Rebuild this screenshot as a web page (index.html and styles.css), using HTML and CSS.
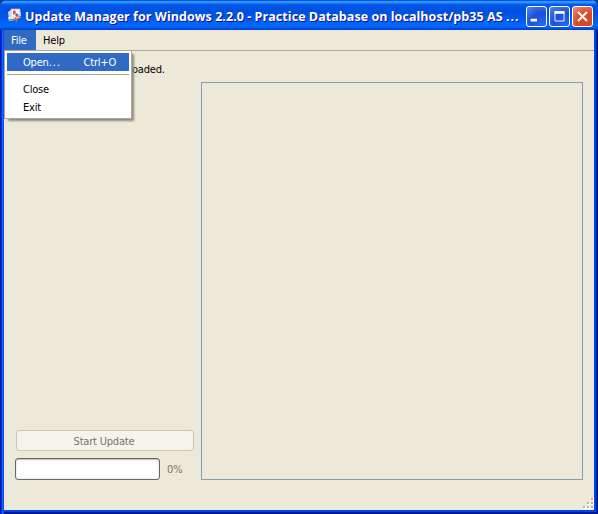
FILE: index.html
```html
<!DOCTYPE html>
<html lang="en">
<head>
<meta charset="utf-8">
<title>Update Manager</title>
<link rel="stylesheet" href="styles.css">
</head>
<body>
<div class="window">
  <header class="titlebar">
    <svg class="app-icon" width="16" height="16" viewBox="0 0 16 16">
      <path d="M1 4l3-2 1 7-3 1z" fill="#d8dce8"/>
      <path d="M4 1h9v9H4z" fill="#f7f5f5" stroke="#b9b7c6" stroke-width=".7"/>
      <path d="M6 3l2-1 1 3-3 2z" fill="#e44b3c"/>
      <path d="M9 5l3 2-2 2-2-2z" fill="#4773c5"/>
      <path d="M1 9l6-1 1 4-6 1z" fill="#e4e5e8"/>
      <path d="M2 12l6-1" stroke="#77747b"/>
      <path d="M14 3v5l-3 1z" fill="#c8cddd"/>
      <path d="M8 9l4-1 2 1-3 1-2 5z" fill="#f06c2e"/>
      <path d="M9 9l3 0-2 2z" fill="#ffd09a"/>
    </svg>
    <h1 class="title">Update Manager for Windows 2.2.0 - Practice Database on localhost/pb35 AS <span class="dots">...</span></h1>
    <div class="controls">
      <svg class="control" width="21" height="21" viewBox="0 0 21 21"><path d="M4 14.5h7" stroke="#fff" stroke-width="3"/></svg>
      <svg class="control" width="21" height="21" viewBox="0 0 21 21"><path d="M5.5 5.5h10v10h-10z" fill="none" stroke="#fff"/><path d="M5 6h11" stroke="#fff" stroke-width="3"/></svg>
      <svg class="control close" width="21" height="21" viewBox="0 0 21 21"><path d="M5.5 5.5l10 10m0-10l-10 10" stroke="#fff" stroke-width="2.2"/></svg>
    </div>
  </header>
  <nav class="menubar">
    <span class="menu-name active">File</span>
    <span class="menu-name">Help</span>
  </nav>
  <div class="popup">
    <div class="item selected"><span>Open<span class="dots">...</span></span><span class="shortcut">Ctrl+O</span></div>
    <div class="separator"></div>
    <div class="item"><span>Close</span></div>
    <div class="item"><span>Exit</span></div>
  </div>
  <main class="content">
    <div class="status">oaded.</div>
    <div class="columns">
      <section class="side">
        <button class="start" disabled>Start Update</button>
        <div class="progress-row"><div class="progress"></div><span class="percent">0%</span></div>
      </section>
      <section class="panel"></section>
    </div>
  </main>
  <svg class="grip" width="12" height="12" viewBox="0 0 12 12">
    <path d="M9 1h3v3H9zM5 5h3v3H5zM9 5h3v3H9zM1 9h3v3H1zM5 9h3v3H5zM9 9h3v3H9z" fill="#fff"/>
    <path d="M9 1h2v2H9zM5 5h2v2H5zM9 5h2v2H9zM1 9h2v2H1zM5 9h2v2H5zM9 9h2v2H9z" fill="#b8b4a3"/>
  </svg>
</div>
</body>
</html>
```
FILE: styles.css
```css
* { box-sizing: border-box; }
body {
  margin: 0;
  background: #003c74;
  font: 11px/14px "DejaVu Sans Condensed", "DejaVu Sans", sans-serif;
  font-stretch: condensed;
  letter-spacing: -0.2px;
  color: #000;
}
.window {
  position: relative;
  display: flex;
  flex-direction: column;
  width: 598px;
  height: 514px;
  padding: 0 4px 4px;
  border-radius: 7px 7px 0 0;
  overflow: hidden;
  background: #ece9d8;
  box-shadow: inset 1px 0 #0019cf, inset 2px 0 #0831d9, inset 3px 0 #166aee, inset 4px 0 #0855dd,
    inset -1px -1px #00138c, inset -2px -2px #001ea0, inset -3px -3px #0441d8, inset -4px -4px #0048f1;
}
.titlebar {
  display: flex;
  align-items: center;
  flex: none;
  height: 30px;
  margin: 0 -4px;
  padding: 3px 5px 0 7px;
  background: linear-gradient(#0058e6 0, #0058e6 1px, #3a93ff 1px, #288eff 3px, #0560e8 4px, #0055e5 6px, #0050e0 11px, #0057e8 17px, #0066fc 24px, #0066ff 27px, #0053e1 28px, #003dd0 30px);
}
.app-icon { flex: none; margin: -2px 2px 0 0; }
.title {
  flex: 1;
  margin: 0;
  padding-top: 1px;
  font: bold 12.5px/16px "Open Sans", sans-serif;
  letter-spacing: 0.05px;
  white-space: nowrap;
  color: #fff;
  text-shadow: 1px 1px #0f1089;
}
.dots { letter-spacing: 1px; }
.controls { display: flex; gap: 2px; }
.control {
  border: 1px solid #fff;
  border-radius: 3px;
  background: radial-gradient(circle at 80% 90%, #2169f0 0, #1b50d8 50%, #5685ef 100%);
}
.control.close { background: radial-gradient(circle at 80% 90%, #d94722 0, #d94a25 50%, #ee9380 100%); }
.menubar {
  display: flex;
  flex: none;
  height: 21px;
  border-bottom: 1px solid #aca899;
}
.menu-name { padding: 4px 8px 0 7px; }
.menu-name.active { width: 32px; background: #316ac5; color: #fff; }
.popup {
  position: absolute;
  left: 4px;
  top: 50px;
  width: 128px;
  height: 69px;
  padding: 2px;
  border: 1px solid #aca899;
  background: #fff;
  box-shadow: 3px 3px 2px -1px #8d8b81;
}
.item { display: flex; justify-content: space-between; height: 18px; padding: 2px 13px 0 16px; }
.item.selected { padding-top: 3px; background: #316ac5; color: #fff; }
.separator { height: 1px; margin: 3px 0 6px; background: #aca899; }
.content { display: flex; flex-direction: column; flex: 1; padding: 12px 11px 30px; }
.status { height: 19px; padding-left: 117px; }
.columns { display: flex; gap: 7px; flex: 1; }
.side { display: flex; flex-direction: column; justify-content: flex-end; width: 179px; }
.start {
  height: 21px;
  margin: 0 0 7px 1px;
  padding: 2px 2px 0 0;
  border: 1px solid #c9c7ba;
  border-radius: 3px;
  background: #f5f4ea;
  font: inherit;
  letter-spacing: inherit;
  color: #77756c;
}
.progress-row { display: flex; align-items: center; gap: 7px; color: #77756c; }
.percent { padding-top: 2px; letter-spacing: 0; }
.progress {
  width: 145px;
  height: 22px;
  border: 1px solid #686868;
  border-radius: 3px;
  background: #fff;
  box-shadow: inset 0 1px 1px #bebebe, inset 0 0 2px 1px #efefef;
}
.panel { width: 382px; border: 1px solid #7f9db9; }
.grip { position: absolute; right: 4px; bottom: 5px; }
```
